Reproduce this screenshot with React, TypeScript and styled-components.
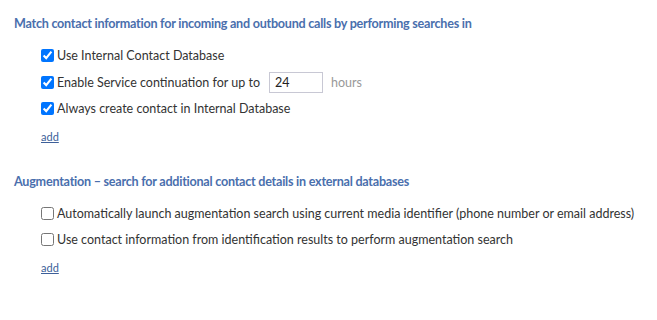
import styled, { createGlobalStyle } from "styled-components";

const GlobalStyle = createGlobalStyle`
  body {
    margin: 0;
    background: #fff;
    font-family: "Lato", "Open Sans", sans-serif;
    color: #333;
  }
`;

const Page = styled.div`
  padding: 15px 14px 0 14px;
  display: flex;
  flex-direction: column;
  gap: 30px;
`;

const Section = styled.section`
  display: flex;
  flex-direction: column;
`;

const Heading = styled.h3`
  margin: 0 0 12px 0;
  font-size: 12.6px;
  font-weight: 700;
  letter-spacing: -0.25px;
  color: #4a6fad;
  line-height: 18px;
  white-space: nowrap;
`;

const Options = styled.div`
  display: flex;
  flex-direction: column;
  padding-left: 27px;
  gap: 5.5px;
`;

const Row = styled.label`
  display: flex;
  align-items: center;
  gap: 3px;
  height: 21px;
  font-size: 12.5px;
  color: #333;
  white-space: nowrap;
`;

const Check = styled.input.attrs({ type: "checkbox" })`
  margin: 0;
  width: 13px;
  height: 13px;
  accent-color: #0075ff;
`;

const Hours = styled.input`
  margin-left: 6px;
  width: 54px;
  height: 21px;
  box-sizing: border-box;
  border: 1px solid #c8c8d4;
  padding: 0 5px;
  font: inherit;
  color: #222;
  outline: none;
`;

const Unit = styled.span`
  margin-left: 5px;
  color: #999;
`;

const AddLink = styled.a`
  margin-top: 5px;
  font-size: 11px;
  color: #3d5f99;
  text-decoration: underline;
  cursor: pointer;
  align-self: flex-start;
`;

export default function App() {
  return (
    <>
      <GlobalStyle />
      <Page>
        <Section>
          <Heading>Match contact information for incoming and outbound calls by performing searches in</Heading>
          <Options>
            <Row>
              <Check defaultChecked />
              Use Internal Contact Database
            </Row>
            <Row>
              <Check defaultChecked />
              Enable Service continuation for up to
              <Hours defaultValue="24" />
              <Unit>hours</Unit>
            </Row>
            <Row>
              <Check defaultChecked />
              Always create contact in Internal Database
            </Row>
            <AddLink>add</AddLink>
          </Options>
        </Section>
        <Section>
          <Heading>Augmentation – search for additional contact details in external databases</Heading>
          <Options>
            <Row>
              <Check />
              Automatically launch augmentation search using current media identifier (phone number or email address)
            </Row>
            <Row>
              <Check />
              Use contact information from identification results to perform augmentation search
            </Row>
            <AddLink>add</AddLink>
          </Options>
        </Section>
      </Page>
    </>
  );
}
